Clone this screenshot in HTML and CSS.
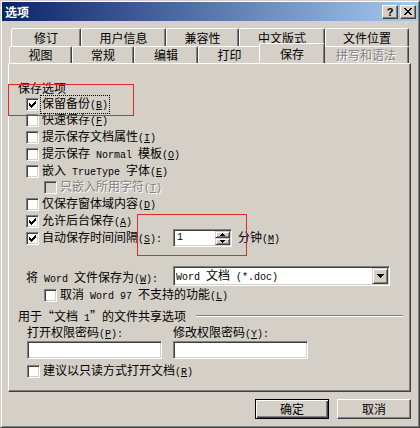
FILE: index.html
```html
<!DOCTYPE html>
<html lang="zh-CN">
<head>
<meta charset="utf-8">
<title>选项</title>
<link rel="stylesheet" href="styles.css">
</head>
<body>
<div class="window">
  <div class="titlebar">
    <span class="title">选项</span>
    <div class="caption">
      <span class="cbtn help">?</span>
      <span class="cbtn close"><svg width="8" height="7" viewBox="0 0 8 7" shape-rendering="crispEdges"><path d="M0 0h2v1h-2zM6 0h2v1h-2zM1 1h2v1h-2zM5 1h2v1h-2zM2 2h4v1h-4zM3 3h2v1h-2zM2 4h4v1h-4zM1 5h2v1h-2zM5 5h2v1h-2zM0 6h2v1h-2zM6 6h2v1h-2z" fill="#000"/></svg></span>
    </div>
  </div>

  <div class="tabs">
    <div class="tabrow back">
      <div class="tab">修订</div>
      <div class="tab">用户信息</div>
      <div class="tab">兼容性</div>
      <div class="tab">中文版式</div>
      <div class="tab">文件位置</div>
    </div>
    <div class="tabrow front">
      <div class="tab">视图</div>
      <div class="tab">常规</div>
      <div class="tab">编辑</div>
      <div class="tab">打印</div>
      <div class="tab sel">保存</div>
      <div class="tab dis">拼写和语法</div>
    </div>
  </div>

  <div class="panel">
    <div class="group-label">保存选项</div>

    <div class="opt">
      <span class="cb"><svg class="ck" width="7" height="7" viewBox="0 0 7 7" shape-rendering="crispEdges"><path d="M6 0h1v1h-1zM5 1h2v1h-2zM0 2h1v1h-1zM4 2h3v1h-3zM0 3h2v1h-2zM3 3h3v1h-3zM0 4h5v1h-5zM1 5h3v1h-3zM2 6h1v1h-1z"/></svg></span>
      <span class="lbl focus">保留备份<span class="en">(<u>B</u>)</span></span>
    </div>
    <div class="opt">
      <span class="cb"></span>
      <span class="lbl">快速保存<span class="en">(<u>F</u>)</span></span>
    </div>
    <div class="opt">
      <span class="cb"></span>
      <span class="lbl">提示保存文档属性<span class="en">(<u>I</u>)</span></span>
    </div>
    <div class="opt">
      <span class="cb"></span>
      <span class="lbl">提示保存<span class="en"> Normal </span>模板<span class="en">(<u>O</u>)</span></span>
    </div>
    <div class="opt">
      <span class="cb"></span>
      <span class="lbl">嵌入<span class="en"> TrueType </span>字体<span class="en">(<u>E</u>)</span></span>
    </div>
    <div class="opt sub">
      <span class="cb off"></span>
      <span class="lbl dis">只嵌入所用字符<span class="en">(<u>T</u>)</span></span>
    </div>
    <div class="opt">
      <span class="cb"></span>
      <span class="lbl">仅保存窗体域内容<span class="en">(<u>D</u>)</span></span>
    </div>
    <div class="opt">
      <span class="cb"><svg class="ck" width="7" height="7" viewBox="0 0 7 7" shape-rendering="crispEdges"><path d="M6 0h1v1h-1zM5 1h2v1h-2zM0 2h1v1h-1zM4 2h3v1h-3zM0 3h2v1h-2zM3 3h3v1h-3zM0 4h5v1h-5zM1 5h3v1h-3zM2 6h1v1h-1z"/></svg></span>
      <span class="lbl">允许后台保存<span class="en">(<u>A</u>)</span></span>
    </div>
    <div class="opt">
      <span class="cb"><svg class="ck" width="7" height="7" viewBox="0 0 7 7" shape-rendering="crispEdges"><path d="M6 0h1v1h-1zM5 1h2v1h-2zM0 2h1v1h-1zM4 2h3v1h-3zM0 3h2v1h-2zM3 3h3v1h-3zM0 4h5v1h-5zM1 5h3v1h-3zM2 6h1v1h-1z"/></svg></span>
      <span class="lbl">自动保存时间间隔<span class="en">(<u>S</u>):</span></span>
      <div class="spin">
        <span class="spin-text en">1</span>
        <div class="spin-btns">
          <span class="spin-btn"><svg width="5" height="3" viewBox="0 0 5 3" shape-rendering="crispEdges"><path d="M2 0h1v1h1v1h1v1h-5v-1h1v-1h1z"/></svg></span>
          <span class="spin-btn"><svg width="5" height="3" viewBox="0 0 5 3" shape-rendering="crispEdges"><path d="M0 0h5v1h-1v1h-1v1h-1v-1h-1v-1h-1z"/></svg></span>
        </div>
      </div>
      <span class="lbl unit">分钟<span class="en">(<u>M</u>)</span></span>
    </div>

    <div class="saveas">
      <span class="saveas-label">将<span class="en"> Word </span>文件保存为<span class="en">(<u>W</u>):</span></span>
      <div class="combo">
        <span class="combo-text"><span class="en">Word </span>文档<span class="en"> (*.doc)</span></span>
        <span class="combo-btn"><svg width="7" height="4" viewBox="0 0 7 4" shape-rendering="crispEdges"><path d="M0 0h7v1h-1v1h-1v1h-1v1h-1v-1h-1v-1h-1v-1h-1z"/></svg></span>
      </div>
    </div>
    <div class="opt sub compat">
      <span class="cb"></span>
      <span class="lbl">取消<span class="en"> Word 97 </span>不支持的功能<span class="en">(<u>L</u>)</span></span>
    </div>

    <div class="share-head">
      <span>用于“文档<span class="en"> 1</span>”的文件共享选项</span>
      <span class="rule"></span>
    </div>
    <div class="pw-labels">
      <span class="pw-label">打开权限密码<span class="en">(<u>P</u>):</span></span>
      <span>修改权限密码<span class="en">(<u>Y</u>):</span></span>
    </div>
    <div class="pw-inputs">
      <span class="field"></span>
      <span class="field"></span>
    </div>
    <div class="opt readonly">
      <span class="cb"></span>
      <span class="lbl">建议以只读方式打开文档<span class="en">(<u>R</u>)</span></span>
    </div>
  </div>

  <div class="actions">
    <div class="btn default">确定</div>
    <div class="btn">取消</div>
  </div>

  <div class="mark mark-a"></div>
  <div class="mark mark-b"></div>
</div>
</body>
</html>
```

FILE: styles.css
```css
* { box-sizing: border-box; }

html, body {
  margin: 0;
  padding: 0;
  background: #d4d0c8;
}

body {
  font-family: "Noto Sans CJK SC", "Liberation Sans", sans-serif;
  font-size: 12px;
  color: #000;
}

.en {
  font-family: "Liberation Mono", "Noto Sans CJK SC", monospace;
  font-size: 10px;
}

u { text-decoration: underline; text-underline-offset: 1px; }

.window {
  position: relative;
  width: 420px;
  height: 428px;
  background: #d4d0c8;
  border: 1px solid;
  border-color: #d4d0c8 #404040 #404040 #d4d0c8;
  box-shadow: inset 1px 1px #fff, inset -1px -1px #808080;
  padding: 1px;
}

/* title bar */
.titlebar {
  height: 19px;
  display: flex;
  align-items: center;
  justify-content: space-between;
  padding: 0 2px 0 3px;
  background: linear-gradient(to right, #0a246a, #a6caf0);
}
.title {
  color: #fff;
  font-weight: bold;
  line-height: 19px;
}
.caption { display: flex; gap: 2px; }
.cbtn {
  width: 16px;
  height: 14px;
  background: #d4d0c8;
  border: 1px solid;
  border-color: #fff #404040 #404040 #fff;
  box-shadow: inset -1px -1px #808080;
  display: flex;
  align-items: center;
  justify-content: center;
}
.help {
  font-family: "Liberation Sans", sans-serif;
  font-weight: bold;
  font-size: 11px;
  line-height: 12px;
}

/* tabs */
.tabs { margin-top: 7px; }
.tabrow { display: flex; }
.tabrow.back { height: 18px; margin-left: 9px; }
.tabrow.front { height: 17px; margin-left: 7px; }
.tab {
  flex: none;
  background: #d4d0c8;
  border: 1px solid;
  border-bottom: none;
  border-color: #fff #404040 transparent #fff;
  box-shadow: inset -1px 0 #808080;
  border-radius: 2px 2px 0 0;
  text-align: center;
  white-space: nowrap;
}
.back .tab { height: 18px; line-height: 17px; }
.front .tab { height: 17px; line-height: 16px; }
.back .tab:nth-child(1) { width: 70px; }
.back .tab:nth-child(2) { width: 85px; }
.back .tab:nth-child(3) { width: 73px; }
.back .tab:nth-child(4) { width: 86px; }
.back .tab:nth-child(5) { width: 84px; }
.front .tab:nth-child(1) { width: 63px; }
.front .tab:nth-child(2) { width: 62px; }
.front .tab:nth-child(3) { width: 64px; }
.front .tab:nth-child(4) { width: 63px; }
.front .tab:nth-child(5) { width: 66px; }
.front .tab:nth-child(6) { width: 86px; }
.front .tab.sel {
  height: 20px;
  margin: -3px -2px 0;
  line-height: 20px;
  position: relative;
  z-index: 2;
}
.tab.dis, .lbl.dis {
  color: #808080;
  text-shadow: 1px 1px #fff;
}

/* panel */
.panel {
  margin-left: 6px;
  width: 403px;
  height: 329px;
  border: 1px solid;
  border-color: #fff #404040 #404040 #fff;
  box-shadow: inset -1px -1px #808080;
  padding: 1px;
}
.group-label {
  margin: 15px 0 0 8px;
  height: 15.625px;
  line-height: 15.625px;
}

.opt {
  height: 16.75px;
  display: flex;
  align-items: center;
  padding-left: 16px;
  white-space: nowrap;
}
.opt.sub { padding-left: 34px; }
.opt.compat { margin-top: 1px; }
.opt.readonly { margin-top: 4px; padding-left: 17px; }

.cb {
  flex: none;
  width: 13px;
  height: 13px;
  background: #fff;
  border: 1px solid;
  border-color: #808080 #fff #fff #808080;
  box-shadow: inset 1px 1px #404040, inset -1px -1px #d4d0c8;
  display: flex;
  align-items: center;
  justify-content: center;
}
.cb.off { background: #d4d0c8; }
.ck { display: block; fill: #000; }

.lbl {
  margin-left: 3px;
  line-height: 14px;
}
.lbl.focus {
  margin-left: 2px;
  padding: 0 1px;
  outline: 1px dotted #000;
}
.lbl.unit { margin-left: 6px; }

/* sunken fields */
.spin, .combo, .field {
  background: #fff;
  border: 1px solid;
  border-color: #808080 #fff #fff #808080;
  box-shadow: inset 1px 1px #404040, inset -1px -1px #d4d0c8;
  padding: 1px;
}

.spin {
  flex: none;
  display: flex;
  width: 59px;
  height: 18px;
  margin-left: 11px;
}
.spin-text {
  flex: 1;
  padding-left: 2px;
  line-height: 14px;
}
.spin-btns {
  width: 15px;
  display: flex;
  flex-direction: column;
}
.spin-btn, .combo-btn {
  background: #d4d0c8;
  border: 1px solid;
  border-color: #d4d0c8 #404040 #404040 #d4d0c8;
  box-shadow: inset 1px 1px #fff, inset -1px -1px #808080;
  display: flex;
  align-items: center;
  justify-content: center;
}
.spin-btn { flex: 1; }
.spin-btn svg, .combo-btn svg { display: block; fill: #000; }

.saveas {
  display: flex;
  align-items: center;
  height: 20px;
  margin-top: 19.625px;
  padding-left: 16px;
  white-space: nowrap;
}
.saveas-label { width: 147px; flex: none; }
.combo {
  display: flex;
  align-items: center;
  width: 217px;
  height: 20px;
}
.combo-text {
  flex: 1;
  padding-left: 1px;
  line-height: 16px;
}
.combo-btn {
  width: 16px;
  height: 16px;
  flex: none;
}

.share-head {
  display: flex;
  align-items: center;
  height: 15px;
  margin-top: 4.25px;
  padding-left: 8px;
  white-space: nowrap;
}
.rule {
  flex: 1;
  height: 2px;
  margin: 0 6px 0 10px;
  border-top: 1px solid #808080;
  border-bottom: 1px solid #fff;
}

.pw-labels {
  display: flex;
  align-items: center;
  height: 16px;
  padding-left: 17px;
  white-space: nowrap;
}
.pw-label { width: 146px; flex: none; }
.pw-inputs {
  display: flex;
  gap: 11px;
  margin-top: 2px;
  padding-left: 17px;
}
.field {
  width: 135px;
  height: 18px;
}

/* buttons */
.actions {
  display: flex;
  justify-content: flex-end;
  gap: 8px;
  width: 403px;
  margin: 7px 0 0 6px;
}
.btn {
  width: 74px;
  height: 20px;
  background: #d4d0c8;
  border: 1px solid;
  border-color: #fff #404040 #404040 #fff;
  box-shadow: inset -1px -1px #808080;
  text-align: center;
  line-height: 18px;
}
.btn.default {
  border-color: #000;
  box-shadow: inset 1px 1px #fff, inset -1px -1px #404040, inset -2px -2px #808080;
}

/* red annotation boxes drawn over the dialog */
.mark {
  position: absolute;
  border: 1px solid #e02a2a;
}
.mark-a { left: 7px; top: 83px; width: 126px; height: 32px; }
.mark-b { left: 136px; top: 213px; width: 110px; height: 42px; }
```
